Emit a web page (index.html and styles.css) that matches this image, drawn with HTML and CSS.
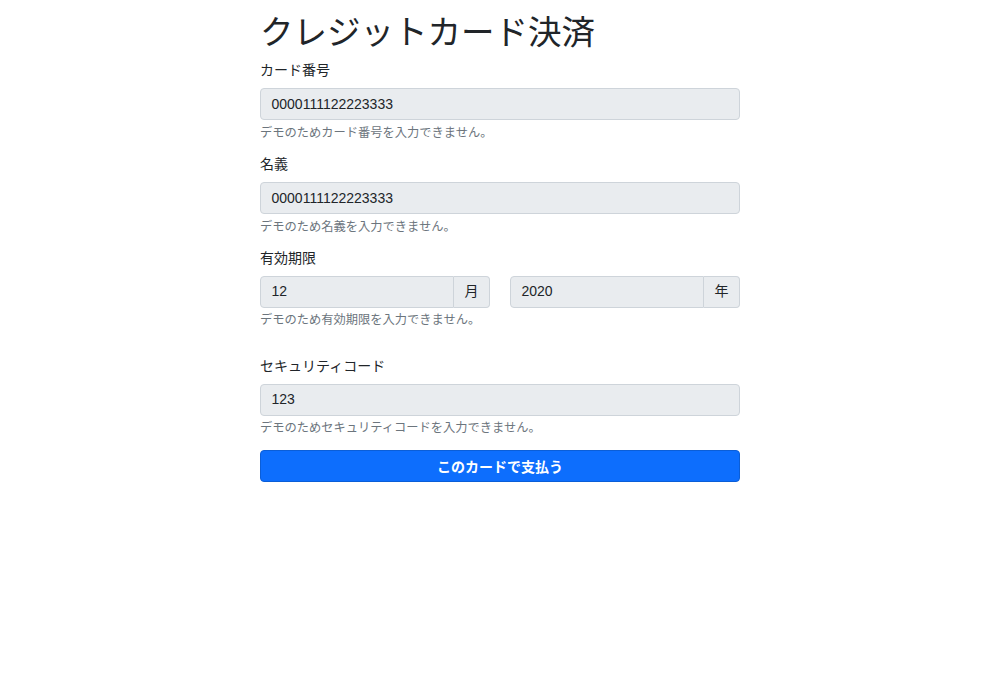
FILE: index.html
```html
<!DOCTYPE html>
<html lang="ja">
<head>
<meta charset="utf-8">
<title>クレジットカード決済</title>
<link rel="stylesheet" href="styles.css">
</head>
<body>
<main class="container">
  <h1 class="title">クレジットカード決済</h1>
  <div class="field">
    <label class="label">カード番号</label>
    <div class="control">0000111122223333</div>
    <div class="help">デモのためカード番号を入力できません。</div>
  </div>
  <div class="field">
    <label class="label">名義</label>
    <div class="control">0000111122223333</div>
    <div class="help">デモのため名義を入力できません。</div>
  </div>
  <div class="field field-wide">
    <label class="label">有効期限</label>
    <div class="row">
      <div class="group">
        <div class="control grow">12</div>
        <div class="addon">月</div>
      </div>
      <div class="group">
        <div class="control grow">2020</div>
        <div class="addon">年</div>
      </div>
    </div>
    <div class="help">デモのため有効期限を入力できません。</div>
  </div>
  <div class="field">
    <label class="label">セキュリティコード</label>
    <div class="control">123</div>
    <div class="help">デモのためセキュリティコードを入力できません。</div>
  </div>
  <button class="btn" type="button">このカードで支払う</button>
</main>
</body>
</html>
```
FILE: styles.css
```css
html, body {
  margin: 0;
  padding: 0;
  background: #fff;
}
body {
  font-family: "Liberation Sans", "Noto Sans CJK JP", sans-serif;
  font-size: 14px;
  line-height: 1.5;
  color: #212529;
}
.container {
  width: 480px;
  margin: 0 auto;
  padding-top: 13px;
}
.title {
  font-size: 33.5px;
  font-weight: 400;
  line-height: 1.2;
  margin: 0 0 7px;
}
.field {
  margin-bottom: 12px;
}
.field-wide {
  margin-bottom: 26px;
}
.label {
  display: block;
  margin-bottom: 7px;
}
.control {
  box-sizing: border-box;
  height: 32px;
  padding: 4.5px 10.5px;
  background: #e9ecef;
  border: 1px solid #ced4da;
  border-radius: 4px;
  color: #212529;
}
.row {
  display: flex;
  gap: 20px;
}
.group {
  flex: 1;
  display: flex;
}
.grow {
  flex: 1;
  border-top-right-radius: 0;
  border-bottom-right-radius: 0;
}
.addon {
  box-sizing: border-box;
  height: 32px;
  padding: 4.5px 10.5px;
  background: #e9ecef;
  border: 1px solid #ced4da;
  border-left: none;
  border-radius: 0 4px 4px 0;
}
.help {
  margin-top: 3.5px;
  font-size: 12.25px;
  color: #6c757d;
}
.btn {
  display: block;
  box-sizing: border-box;
  width: 100%;
  height: 32px;
  margin-top: 0;
  padding: 0;
  background: #0d6efd;
  border: 1px solid #0b5ed7;
  border-radius: 4px;
  color: #fff;
  font-family: inherit;
  font-size: 14px;
  font-weight: 700;
}
```
